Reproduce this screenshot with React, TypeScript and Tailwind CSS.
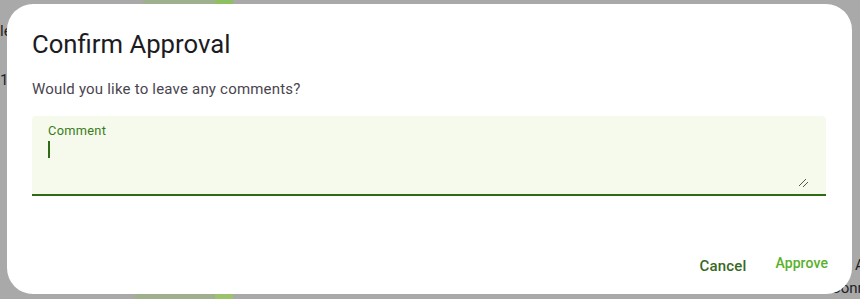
import React from "react";

export default function App() {
  return (
    <div
      className="relative w-[860px] h-[299px] overflow-hidden bg-[#a9a9a9]"
      style={{ fontFamily: "Roboto, 'Noto Sans', sans-serif" }}
    >
      {/* dimmed page content behind the modal */}
      <div className="absolute inset-0 flex justify-between">
        <div className="flex w-[7px] flex-col overflow-hidden pt-[22px] text-[15px] leading-[18px] text-[#1f1f1f]">
          <span className="whitespace-nowrap">le</span>
          <span className="mt-[31px]">1</span>
        </div>
        <div className="flex w-[30px] flex-col pt-[256px] text-[15px] leading-[18px] text-[#1f1f1f]">
          <span className="pl-[25px]">A</span>
          <span className="mt-[5px] whitespace-nowrap pl-[1px]">Conno</span>
        </div>
      </div>
      <div className="absolute left-[143px] top-0 flex h-[5px]">
        <div className="w-[72px] bg-[#9fb08f]" />
        <div className="w-[18px] bg-[#8fbf63]" />
      </div>
      <div className="absolute left-[135px] top-[294px] flex h-[5px]">
        <div className="w-[80px] bg-[#9fb08f]" />
        <div className="w-[18px] bg-[#9cc36c]" />
      </div>

      {/* dialog */}
      <div className="absolute left-[7px] top-[4px] flex h-[290px] w-[845px] flex-col rounded-[26px] bg-white pl-[25px] pr-[24px] pt-[23px] pb-[22px]">
        <h2 className="text-[25.7px] leading-[34px] font-normal text-[#1c1b1f]">Confirm Approval</h2>
        <p className="mt-[18px] text-[15px] leading-[20px] tracking-[0.2px] text-[#49454f]">
          Would you like to leave any comments?
        </p>
        <div className="relative mt-[17px] h-[80px] w-[794px] rounded-t-[4px] border-b-2 border-[#2f6b12] bg-[#f5faec] px-[16px] pt-[6px]">
          <div className="text-[12.8px] leading-[18px] tracking-[0.3px] text-[#3c7a1c]">Comment</div>
          <div className="mt-[1px] h-[17px] w-[2px] bg-[#2f6b12]" />
          <svg
            className="absolute right-[17px] bottom-[6px]"
            width="11"
            height="11"
            viewBox="0 0 11 11"
          >
            <line x1="1" y1="9" x2="8" y2="2" stroke="#555" strokeWidth="1" />
            <line x1="5" y1="10" x2="10" y2="5" stroke="#555" strokeWidth="1" />
          </svg>
        </div>
        <div className="mt-auto flex items-end justify-end gap-[29px]">
          <button className="mb-[-4px] text-[15px] leading-[20px] font-medium tracking-[0.15px] text-[#38691f]">
            Cancel
          </button>
          <button className="mb-[-1px] text-[14px] leading-[20px] font-medium tracking-[0.1px] text-[#58b12a]">
            Approve
          </button>
        </div>
      </div>
    </div>
  );
}
